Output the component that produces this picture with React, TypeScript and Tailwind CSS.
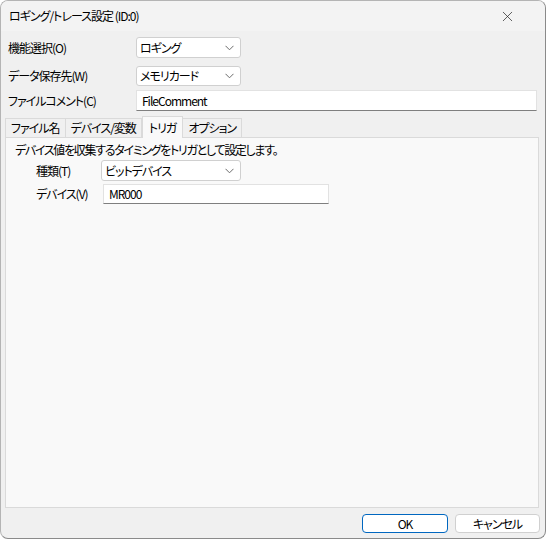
import { X } from 'lucide-react';

const font =
  "[font-family:'Noto_Sans_CJK_JP','Noto_Sans',sans-serif] [font-feature-settings:'palt'] tracking-[-1px]";

function Chevron() {
  return (
    <svg width="9" height="6" viewBox="0 0 9 6" className="shrink-0">
      <path d="M0.5 0.8 L4.5 4.8 L8.5 0.8" fill="none" stroke="#6b6b6b" strokeWidth="1" />
    </svg>
  );
}

function Combo({ value, className }: { value: string; className: string }) {
  return (
    <div
      className={`flex items-center justify-between rounded-[3px] border border-[#d0d0d0] bg-white pl-[3px] pr-[6px] text-[12px] text-black ${className}`}
    >
      <span>{value}</span>
      <Chevron />
    </div>
  );
}

function TextBox({ value, className }: { value: string; className: string }) {
  return (
    <div
      className={`flex items-center border border-[#e2e2e2] border-b-[#7f7f7f] bg-white pl-[5px] text-[12px] text-black ${className}`}
    >
      {value}
    </div>
  );
}

function Tab({ label, active }: { label: string; active?: boolean }) {
  return active ? (
    <div className="relative z-10 -mb-px flex h-[22px] items-center border border-b-0 border-[#dadada] bg-[#f9f9f9] px-[6px] text-[12px]">
      {label}
    </div>
  ) : (
    <div className="mt-[2px] flex h-[19px] items-center border border-b-0 border-l-0 border-[#dadada] px-[5px] text-[12px] first:border-l">
      {label}
    </div>
  );
}

export default function App() {
  return (
    <div
      className={`flex h-[539px] w-[546px] flex-col overflow-hidden rounded-[8px] border border-[#b4b4b4] border-r-[#8a8a8a] border-b-[#8a8a8a] bg-[#f0f0f0] text-black ${font}`}
    >
      {/* Title bar */}
      <div className="flex h-[30px] shrink-0 items-center justify-between bg-[#f3f3f3] pl-[8px] pr-[29px]">
        <span className="text-[12px] tracking-[-1px]">ロギング/トレース設定 (ID:0)</span>
        <X size={17} strokeWidth={1} className="text-[#222]" />
      </div>

      {/* Body */}
      <div className="flex flex-1 flex-col pt-[6px]">
        <div className="flex flex-col px-[7px]">
          <div className="flex h-[21px] items-center">
            <span className="w-[128px] text-[12px]">機能選択(O)</span>
            <Combo value="ロギング" className="h-[21px] w-[105px]" />
          </div>
          <div className="mt-[8px] flex h-[20px] items-center">
            <span className="w-[128px] text-[12px]">データ保存先(W)</span>
            <Combo value="メモリカード" className="h-[20px] w-[105px]" />
          </div>
          <div className="mt-[4px] flex h-[21px] items-center pr-[1px]">
            <span className="w-[128px] text-[12px]">ファイルコメント(C)</span>
            <TextBox value="FileComment" className="h-[21px] flex-1" />
          </div>
        </div>

        {/* Tabs */}
        <div className="mt-[5px] flex pl-[4px]">
          <Tab label="ファイル名" />
          <Tab label="デバイス/変数" />
          <Tab label="トリガ" active />
          <Tab label="オプション" />
        </div>

        <div className="ml-[4px] mr-[6px] flex h-[371px] flex-col border border-[#dadada] bg-[#f9f9f9] pl-[9px] pt-[4px]">
          <div className="text-[12px] leading-[16px] tracking-[-1.3px]">
            デバイス値を収集するタイミングをトリガとして設定します。
          </div>
          <div className="mt-[2px] flex h-[21px] items-center pl-[21px]">
            <span className="w-[65px] text-[12px]">種類(T)</span>
            <Combo value="ビットデバイス" className="h-[21px] w-[140px]" />
          </div>
          <div className="mt-[3px] flex h-[20px] items-center pl-[21px]">
            <span className="w-[67px] text-[12px]">デバイス(V)</span>
            <TextBox value="MR000" className="h-[20px] w-[226px]" />
          </div>
        </div>

        {/* Buttons */}
        <div className="mt-[6px] flex justify-end gap-[7px] pr-[5px]">
          <button className="flex h-[19px] w-[86px] items-center justify-center rounded-[4px] border border-[#0067c0] bg-white text-[12px]">
            OK
          </button>
          <button className="flex h-[19px] w-[85px] items-center justify-center rounded-[4px] border border-[#d0d0d0] bg-white text-[12px]">
            キャンセル
          </button>
        </div>
      </div>
    </div>
  );
}
